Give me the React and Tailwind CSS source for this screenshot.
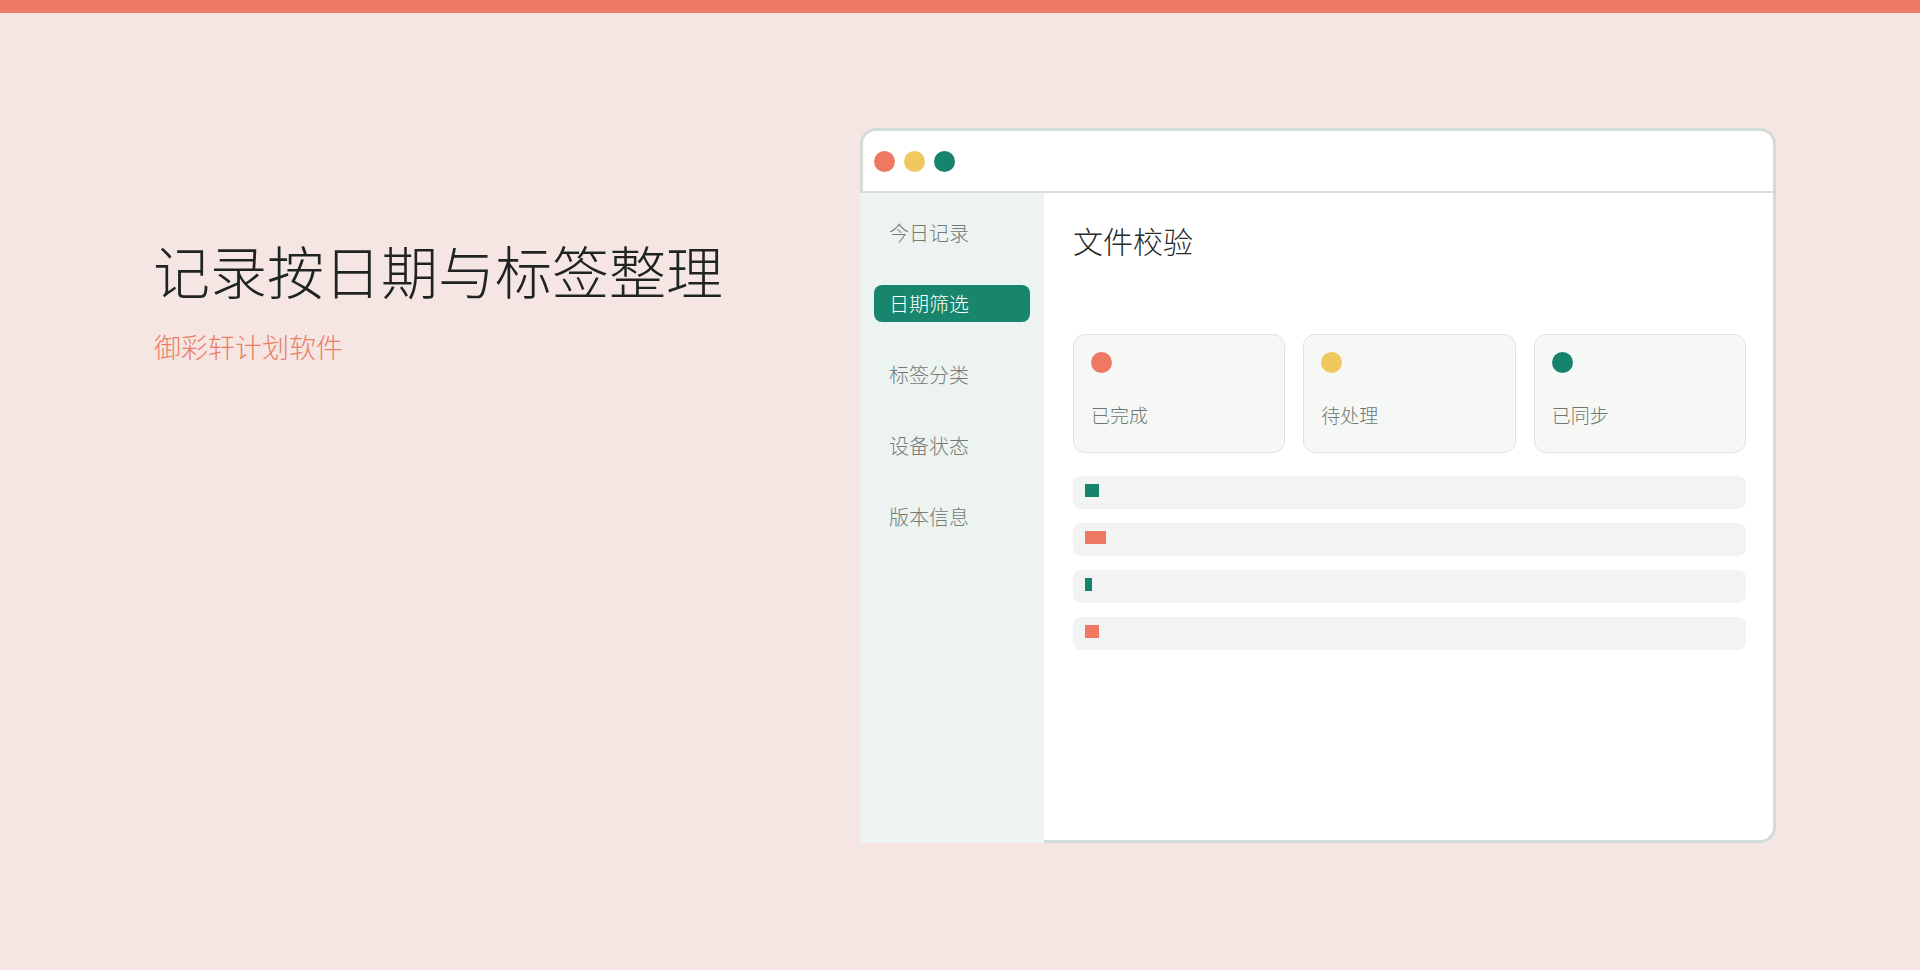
export default function App() {
  const navItems = ["今日记录", "日期筛选", "标签分类", "设备状态", "版本信息"];
  const cards = [
    { label: "已完成", color: "bg-[#ef7862]" },
    { label: "待处理", color: "bg-[#efc95f]" },
    { label: "已同步", color: "bg-[#16846c]" },
  ];
  const bars = [
    { w: 14, color: "bg-[#16846c]" },
    { w: 21, color: "bg-[#ef7862]" },
    { w: 7, color: "bg-[#16846c]" },
    { w: 14, color: "bg-[#ef7862]" },
  ];
  return (
    <div className="w-[1920px] h-[970px] bg-[#f5e6e3] font-['Noto_Sans_CJK_SC','Noto_Sans',sans-serif] font-light overflow-hidden">
      <div className="h-[13px] bg-[#f07a63]" />
      <div className="flex justify-between items-start pl-[153px] pr-[144px]">
        <div className="mt-[222px]">
          <h1 className="text-[57px] leading-[68px] text-[#1f2422] font-light">记录按日期与标签整理</h1>
          <p className="mt-[27px] ml-[1px] text-[27px] leading-[33px] text-[#ec7e68]">御彩轩计划软件</p>
        </div>
        <div className="mt-[115px] w-[916px] h-[715px] rounded-2xl border-[3px] border-[#d3dcd8] bg-white flex flex-col">
          <div className="h-[62px] shrink-0 border-b-2 border-[#d6dfdb] flex items-center pl-[11px] gap-[9px]">
            <span className="w-[21px] h-[21px] rounded-full bg-[#ef7862]" />
            <span className="w-[21px] h-[21px] rounded-full bg-[#efc95f]" />
            <span className="w-[21px] h-[21px] rounded-full bg-[#16846c]" />
          </div>
          <div className="flex flex-1 -ml-[3px] -mb-[3px]">
            <aside className="w-[184px] shrink-0 bg-[#edf3f1] px-[14px] pt-[21px] flex flex-col gap-[34px]">
              {navItems.map((t, i) => (
                <div
                  key={t}
                  className={
                    i === 1
                      ? "h-[37px] rounded-lg bg-[#17866d] text-white flex items-center pl-[15px] text-[20px]"
                      : "h-[37px] rounded-lg text-[#737b77] flex items-center pl-[15px] text-[20px]"
                  }
                >
                  {t}
                </div>
              ))}
            </aside>
            <main className="flex-1 pl-[29px] pr-[27px] pt-[28px]">
              <h2 className="text-[30px] leading-[39px] text-[#262b29] font-light">文件校验</h2>
              <div className="mt-[74px] grid grid-cols-3 gap-[18px]">
                {cards.map((c) => (
                  <div
                    key={c.label}
                    className="h-[119px] rounded-xl border border-[#dde3e0] bg-[#f6f8f6] pl-[17px] pt-[17px] flex flex-col"
                  >
                    <span className={`w-[21px] h-[21px] rounded-full ${c.color}`} />
                    <span className="mt-[28px] text-[19px] leading-[27px] text-[#6f7773]">{c.label}</span>
                  </div>
                ))}
              </div>
              <div className="mt-[23px] flex flex-col gap-[14px]">
                {bars.map((b, i) => (
                  <div key={i} className="h-[33px] rounded-lg bg-[#f2f4f3] pl-[12px] pt-[8px]">
                    <div className={`h-[13px] ${b.color}`} style={{ width: b.w }} />
                  </div>
                ))}
              </div>
            </main>
          </div>
        </div>
      </div>
    </div>
  );
}
